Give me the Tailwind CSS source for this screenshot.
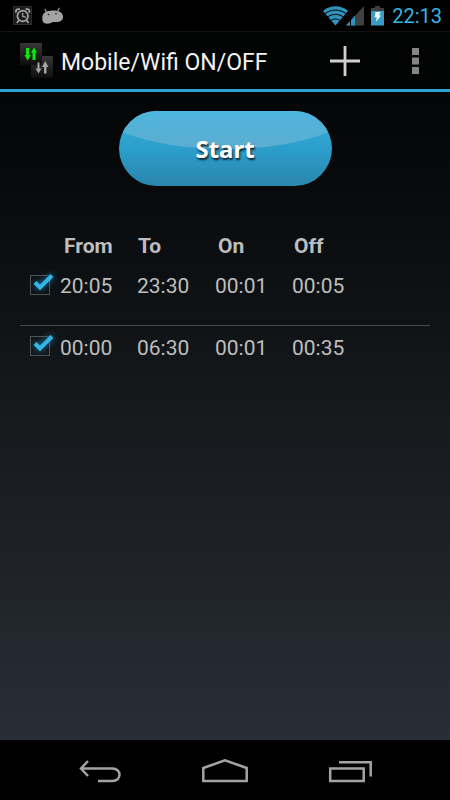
<!DOCTYPE html>
<html lang="en">
<head>
<meta charset="utf-8">
<meta name="viewport" content="width=device-width, initial-scale=1">
<title>Mobile/Wifi ON/OFF</title>
<script src="https://cdn.jsdelivr.net/npm/@tailwindcss/browser@4"></script>
</head>
<body class="flex min-h-screen flex-col bg-black font-['Roboto',sans-serif] text-[#bebebe]">

<div class="flex h-[31px] items-center justify-between bg-black pr-2 pl-[13px]">
  <div class="flex items-center gap-[9px]">
    <svg class="h-5 w-5" viewBox="0 0 20 20" aria-label="Alarm" role="img">
      <rect x="0.5" y="0.5" width="18" height="18" fill="#1b1b1b" stroke="#2c2c2c"/>
      <g fill="none" stroke="#a9a9a9" stroke-linecap="round">
        <circle cx="9.700" cy="10" r="5.300" stroke-width="1.700"/>
        <path d="M9.700 7v3.300l2.600.8" stroke-width="1.200"/>
        <path d="M3 6c-.5-2 .8-3.200 3.200-2.900M16.400 6c.5-2-.8-3.200-3.200-2.900" stroke-width="1.800"/>
        <path d="M5.800 14.500l-1.600 2M13.600 14.500l1.600 2" stroke-width="1.600"/>
      </g>
    </svg>
    <svg class="h-[18px] w-[22px]" viewBox="0 0 22 18" aria-label="Android" role="img">
      <path d="M.3 11C.3 6 4 3.600 10.500 3.400C17 3.200 20.500 5.500 21 9C21.500 13 18.500 15 14 15C12 15 11 14.800 9.800 15.600C7.500 17 4 17.200 2 16C.7 15 .3 13 .3 11z" fill="#a3a3a3"/>
      <path d="M4.600 5.500L3 2.300M15.500 4.500L17.200 1.200" stroke="#a3a3a3" stroke-width="1.200" stroke-linecap="round"/>
      <circle cx="6.500" cy="7.500" r=".8" fill="#111"/><circle cx="14" cy="6.800" r=".8" fill="#111"/>
    </svg>
  </div>
  <div class="flex items-center">
    <svg class="h-5 w-[25px]" viewBox="0 0 25 20" aria-label="Wi-Fi" role="img">
      <path d="M12.500 19.500L0 5C7 -1.200 18 -1.200 25 5z" fill="#2f94bd"/>
      <path d="M1.500 8C8 2.800 17 2.800 23.500 8M4 11.500C9 7.300 16 7.300 21 11.500M7 15C10.500 12.300 14.500 12.300 18 15" fill="none" stroke="#000" stroke-width="1"/>
    </svg>
    <svg class="-ml-0.5 h-5 w-[18px]" viewBox="0 0 18 20" aria-label="Signal" role="img">
      <path d="M0 19.500L18 0V19.500z" fill="#404040"/>
      <path d="M0 19.500L9 9.700V19.500z" fill="#2f94bd"/>
      <path d="M4.500 14v6" stroke="#000" stroke-width="1"/>
    </svg>
    <svg class="ml-[7px] h-5 w-[13px]" viewBox="0 0 13 20" aria-label="Battery charging" role="img">
      <path d="M4 0h5v2h4v17H0V2h4z" fill="#404040"/>
      <path d="M0 5h13v14.500H0z" fill="#3a9cc4"/>
      <path d="M4.500 6h5L8.200 9.500h2L4.800 16l1-4.800H3.500z" fill="#f2f8fa"/>
    </svg>
    <span class="ml-2 text-[20px] leading-6 text-[#33b5e5]">22:13</span>
  </div>
</div>

<header class="flex h-[61px] items-center border-t border-b-3 border-t-[#141414] border-b-[#2ca4d1] bg-[#020303] pl-5">
  <svg class="h-9 w-[34px]" viewBox="0 0 34 36" aria-hidden="true">
    <defs>
      <linearGradient id="tile" x1="0" y1="0" x2="0" y2="1">
        <stop offset="0" stop-color="#373737"/><stop offset=".5" stop-color="#222"/><stop offset="1" stop-color="#0d0d0d"/>
      </linearGradient>
    </defs>
    <rect x="11" y="13" width="22" height="22" rx="1" fill="url(#tile)"/>
    <rect x="0" y="0" width="22" height="22" rx="1" fill="url(#tile)"/>
    <path d="M6 5h3v7h2L7.500 17.500L4.500 12H6zM12.500 17V9.500H11L14 4.500L17 9.500H15.500V17z" fill="#0be80e"/>
    <path d="M17.500 19.500h2v6h2L18.500 30.500L15.500 25.500h2zM24 30.500V24H22L25.200 18L28.500 24H26.500V30.500z" fill="#a5a5a5"/>
  </svg>
  <h1 class="ml-[7px] flex-1 pt-1 text-[23px] leading-7 whitespace-nowrap text-[#f3f3f3]">Mobile/Wifi ON/OFF</h1>
  <button type="button" aria-label="Add" class="flex h-full w-[70px] items-center justify-center">
    <svg class="h-[30px] w-[30px]" viewBox="0 0 30 30"><path d="M15 0v30M0 15h30" stroke="#d0d0d0" stroke-width="2.800"/></svg>
  </button>
  <button type="button" aria-label="More options" class="flex h-full w-[70px] items-center justify-center">
    <svg class="h-[26px] w-[7px]" viewBox="0 0 7 26"><path d="M0 0h7v7H0zM0 9.500h7v7H0zM0 19h7v7H0z" fill="#858585"/></svg>
  </button>
</header>

<main class="flex-1 bg-linear-to-b from-[#040506] via-[#161a1d] to-[#292d36] px-5 pt-[19px]">
  <div class="flex justify-center">
    <button type="button" class="relative flex h-[75px] w-[213px] items-center justify-center overflow-hidden rounded-full bg-linear-to-b from-[#35b2df] via-[#2b9ecb] to-[#2a86ad]">
      <span class="absolute -top-[70px] -left-[35px] h-[108px] w-[283px] rounded-[50%] bg-linear-to-b from-[#4db5de] from-65% to-[#5cadcf]"></span>
      <span class="relative font-['Noto_Sans',sans-serif] text-[24px] leading-8 font-bold text-white [text-shadow:1px_2px_2px_#123]">Start</span>
    </button>
  </div>

  <table class="mt-11 w-full table-fixed text-left text-[21px] leading-7">
    <colgroup><col class="w-10"><col class="w-[77px]"><col class="w-[78px]"><col class="w-[77px]"><col></colgroup>
    <thead>
      <tr class="h-8">
        <td></td>
        <th scope="col" class="pl-1 font-bold">From</th>
        <th scope="col" class="pl-px font-bold">To</th>
        <th scope="col" class="pl-[3px] font-bold">On</th>
        <th scope="col" class="pl-0.5 font-bold">Off</th>
      </tr>
    </thead>
    <tbody>
      <tr class="h-[63px] border-b border-[#46484b] align-top">
        <td class="pt-[13px] pl-[10px]">
          <label class="relative block h-5 w-5">
            <input type="checkbox" checked aria-label="Enable 20:05 to 23:30" class="peer block h-5 w-5 appearance-none border border-[#505355]">
            <svg class="pointer-events-none absolute -top-1 left-0 hidden h-6 w-7 overflow-visible drop-shadow-[0_0_3px_#1687b8] peer-checked:block" viewBox="0 0 28 24"><path d="M5 11.500L10 16.500L22 4.500" fill="none" stroke="#33b5e5" stroke-width="4"/></svg>
          </label>
        </td>
        <td class="pt-[10px]">20:05</td><td class="pt-[10px]">23:30</td><td class="pt-[10px]">00:01</td><td class="pt-[10px]">00:05</td>
      </tr>
      <tr class="h-[61px] align-top">
        <td class="pt-[10px] pl-[10px]">
          <label class="relative block h-5 w-5">
            <input type="checkbox" checked aria-label="Enable 00:00 to 06:30" class="peer block h-5 w-5 appearance-none border border-[#505355]">
            <svg class="pointer-events-none absolute -top-1 left-0 hidden h-6 w-7 overflow-visible drop-shadow-[0_0_3px_#1687b8] peer-checked:block" viewBox="0 0 28 24"><path d="M5 11.500L10 16.500L22 4.500" fill="none" stroke="#33b5e5" stroke-width="4"/></svg>
          </label>
        </td>
        <td class="pt-2">00:00</td><td class="pt-2">06:30</td><td class="pt-2">00:01</td><td class="pt-2">00:35</td>
      </tr>
    </tbody>
  </table>
</main>

<nav class="flex h-[60px] items-center justify-center bg-black pt-0.5">
  <button type="button" aria-label="Back" class="flex h-full w-[125px] items-center justify-center">
    <svg class="h-6 w-[42px]" viewBox="0 0 42 24" fill="none" stroke="#a3a3a3" stroke-width="2.500"><path d="M9 2L2 9.500L9 17M2 9.500H33.500C38 9.500 40.500 12.500 40.500 15.600C40.500 19 38 22 33.500 22H19"/></svg>
  </button>
  <button type="button" aria-label="Home" class="flex h-full w-[125px] items-center justify-center">
    <svg class="h-6 w-[46px]" viewBox="0 0 46 24" fill="none" stroke="#a3a3a3" stroke-width="2.500"><path d="M1.300 22V9L23 1.300L44.700 9V22z"/></svg>
  </button>
  <button type="button" aria-label="Recent apps" class="flex h-full w-[125px] items-center justify-center">
    <svg class="h-6 w-[44px]" viewBox="0 0 44 24" fill="none" stroke="#a3a3a3" stroke-width="2.500"><path d="M2.200 9.500H35.700V22H2.200zM11 3.200H42.700V17.500"/></svg>
  </button>
</nav>
</body>
</html>
